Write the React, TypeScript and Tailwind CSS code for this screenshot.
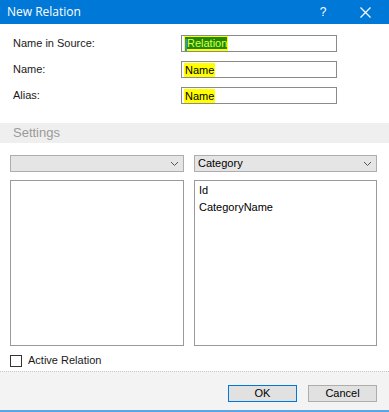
import React from 'react';

function Field({ label, value, selected }: { label: string; value: string; selected?: boolean }) {
  return (
    <div className="flex items-center h-[17px]">
      <span className="w-[181px] pl-[13px] text-[11px] text-[#1a1a1a]">{label}</span>
      <div className="w-[156px] h-[17px] border border-[#8a8a8a] bg-white flex items-center pl-[2px]">
        {selected ? (
          <span className="relative bg-[#ffff00] px-[1px] text-[11px] leading-[14px]">
            <span className="bg-[#1f8a00] text-[#dfff50] pl-[1px]">
              <span className="inline-block w-[2px] h-[12px] bg-[#2d8fe0] align-middle -ml-[1px]" />
              {value}
            </span>
          </span>
        ) : (
          <span className="bg-[#ffff00] px-[1px] text-[11px] leading-[14px] text-black">{value}</span>
        )}
      </div>
    </div>
  );
}

function Chevron() {
  return (
    <svg width="9" height="6" viewBox="0 0 9 6" className="mr-[4px]">
      <path d="M1 1 L4.5 4.5 L8 1" fill="none" stroke="#555" strokeWidth="1" />
    </svg>
  );
}

export default function App() {
  return (
    <div
      className="w-[389px] h-[412px] bg-white flex flex-col overflow-hidden"
      style={{ fontFamily: '"Liberation Sans", Arial, sans-serif' }}
    >
      {/* Title bar */}
      <div className="h-[24px] bg-[#0078d7] flex items-center text-white shrink-0">
        <span className="pl-[7px] text-[12px] flex-1" style={{ fontFamily: '"Open Sans", sans-serif' }}>New Relation</span>
        <span className="w-[20px] text-center text-[12px] mr-[27px]">?</span>
        <svg width="11" height="11" viewBox="0 0 11 11" className="mr-[18px]">
          <path d="M0.5 0.5 L10.5 10.5 M10.5 0.5 L0.5 10.5" stroke="white" strokeWidth="1.2" />
        </svg>
      </div>

      {/* Fields */}
      <div className="flex flex-col gap-[9px] pt-[11px]">
        <Field label="Name in Source:" value="Relation" selected />
        <Field label="Name:" value="Name" />
        <Field label="Alias:" value="Name" />
      </div>

      {/* Settings header */}
      <div className="mt-[19px] h-[20px] bg-[#efefef] flex items-center pl-[13px] text-[13px] text-[#9a9a9a]">
        Settings
      </div>

      {/* Dropdowns + lists */}
      <div className="flex gap-[10px] px-[10px] pt-[12px]">
        <div className="w-[174px] flex flex-col gap-[8px]">
          <div className="h-[17px] border border-[#adadad] bg-[#e5e5e5] flex items-center justify-end">
            <Chevron />
          </div>
          <div className="h-[166px] border border-[#9a9a9a] bg-white" />
        </div>
        <div className="w-[183px] flex flex-col gap-[8px]">
          <div className="h-[17px] border border-[#adadad] bg-[#e5e5e5] flex items-center justify-between pl-[3px]">
            <span className="text-[11px] text-black">Category</span>
            <Chevron />
          </div>
          <div className="h-[166px] border border-[#9a9a9a] bg-white pl-[4px] pt-[2px] flex flex-col gap-[3px] text-[11px] text-black leading-[14px]">
            <span>Id</span>
            <span>CategoryName</span>
          </div>
        </div>
      </div>

      {/* Checkbox */}
      <div className="flex items-center gap-[6px] pl-[10px] mt-[8px] h-[13px]">
        <div className="w-[12px] h-[12px] border border-[#333] bg-white" />
        <span className="text-[11px] text-[#1a1a1a]">Active Relation</span>
      </div>

      {/* Footer */}
      <div className="mt-[4px] flex-1 bg-[#f3f3f3] border-t border-dotted border-[#c8c8c8] flex flex-col">
        <div className="flex justify-end gap-[11px] pr-[12px] pt-[13px]">
          <button className="w-[69px] h-[17px] border border-[#0078d7] bg-[#e1e1e1] text-[11px] text-black leading-none">OK</button>
          <button className="w-[69px] h-[17px] border border-[#adadad] bg-[#e1e1e1] text-[11px] text-black leading-none">Cancel</button>
        </div>
        <div className="mt-auto h-[2px] bg-[#5aa6e6]" />
      </div>
    </div>
  );
}
